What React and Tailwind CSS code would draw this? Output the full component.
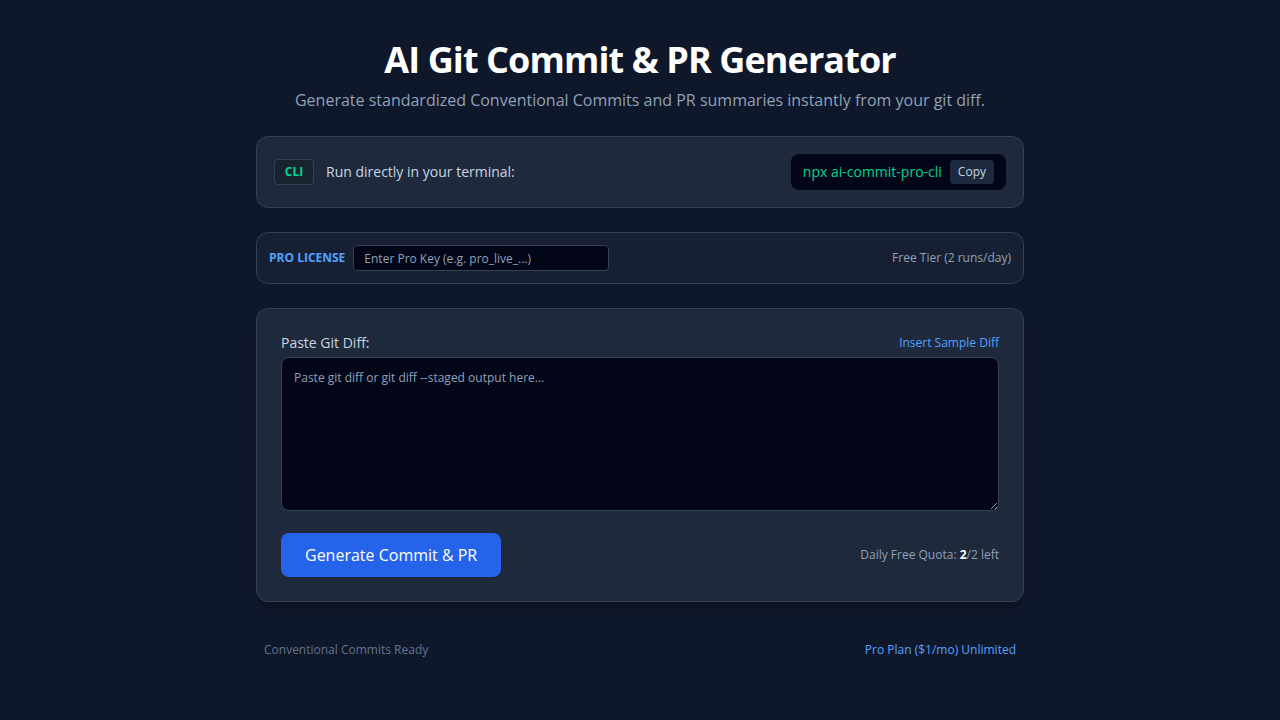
export default function App() {
  return (
    <div className="min-h-screen bg-[#0f172a] text-slate-200" style={{ fontFamily: '"Open Sans", "Noto Sans", sans-serif' }}>
      <div className="mx-auto max-w-3xl pt-10">
        <h1 className="text-center text-4xl font-bold leading-10 tracking-tight text-white">AI Git Commit &amp; PR Generator</h1>
        <p className="mt-2 text-center text-base leading-6 text-slate-400">
          Generate standardized Conventional Commits and PR summaries instantly from your git diff.
        </p>

        <div className="mt-6 flex items-center justify-between rounded-xl border border-slate-700 bg-[#1e293b] p-[17px]">
          <div className="flex items-center gap-3">
            <span className="flex h-[26px] w-10 items-center justify-center rounded border border-slate-700 bg-[repeating-conic-gradient(#1b2633_0%_25%,#16202c_0%_50%)] bg-[length:2px_2px] text-xs font-bold text-emerald-400">
              CLI
            </span>
            <span className="text-sm text-slate-300">Run directly in your terminal:</span>
          </div>
          <div className="flex h-9 items-center gap-2 rounded-lg bg-[#020617] pl-3 pr-3">
            <span className="text-sm text-emerald-400">npx ai-commit-pro-cli</span>
            <button className="rounded bg-slate-800 px-2 py-[3px] text-xs leading-[18px] text-slate-300">Copy</button>
          </div>
        </div>

        <div className="mt-6 flex h-[52px] items-center justify-between rounded-xl border border-slate-700 bg-[#172032] px-3">
          <div className="flex items-center gap-2">
            <span className="text-xs font-bold text-blue-400">PRO LICENSE</span>
            <input
              className="h-[26px] w-64 rounded border border-slate-700 bg-[#020617] px-[10px] text-xs text-slate-300 placeholder:text-slate-400 outline-none"
              placeholder="Enter Pro Key (e.g. pro_live_...)"
            />
          </div>
          <span className="text-xs text-slate-400">Free Tier (2 runs/day)</span>
        </div>

        <div className="mt-6 rounded-xl border border-slate-700 bg-[#1e293b] p-6 shadow-lg">
          <div className="mb-1 flex items-center justify-between">
            <span className="text-sm leading-5 text-slate-300">Paste Git Diff:</span>
            <span className="text-xs text-blue-400">Insert Sample Diff</span>
          </div>
          <textarea
            className="block h-[154px] w-full rounded-lg border border-slate-700 bg-[#020617] p-3 text-xs text-slate-300 placeholder:text-slate-400 outline-none"
            placeholder="Paste git diff or git diff --staged output here..."
          />
          <div className="mt-[22px] flex items-center justify-between">
            <button className="h-11 rounded-lg bg-[#2563eb] px-6 text-base text-white">Generate Commit &amp; PR</button>
            <span className="text-xs text-slate-400">
              Daily Free Quota: <b className="font-bold text-white">2</b>/2 left
            </span>
          </div>
        </div>

        <div className="mt-6 flex items-center justify-between px-2 py-4 text-xs">
          <span className="text-slate-500">Conventional Commits Ready</span>
          <span className="text-blue-400">Pro Plan ($1/mo) Unlimited</span>
        </div>
      </div>
    </div>
  );
}
